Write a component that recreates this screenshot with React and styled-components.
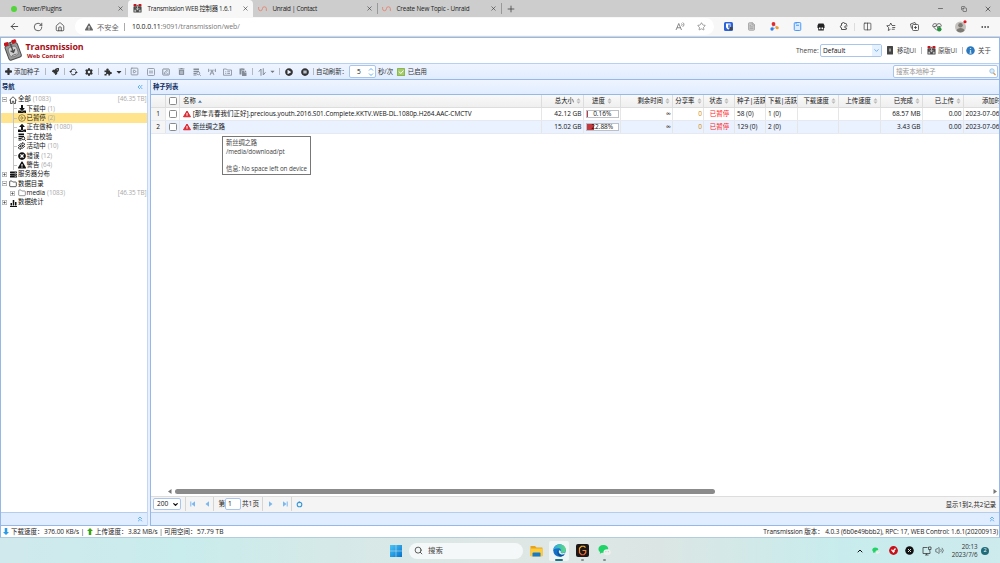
import React from 'react';
import styled, { createGlobalStyle } from 'styled-components';
import {
  ArrowLeft, RotateCw, House, Star, X, Plus, Minus, Copy, Search, ChevronDown, ChevronUp,
  ChevronsLeft, ChevronsUp, Ellipsis, Columns2, FileText, Volume2, SquarePlay, Folder, CirclePlay,
} from 'lucide-react';
import {
  FaRocket, FaCog, FaCaretDown, FaTrashAlt, FaPlayCircle, FaPauseCircle,
  FaExclamationTriangle, FaDownload, FaUpload, FaTimesCircle, FaServer, FaBroadcastTower,
  FaPaste,
} from 'react-icons/fa';

const Global = createGlobalStyle`
  * { box-sizing: border-box; }
  html, body, #root { margin: 0; height: 100%; }
  body {
    overflow: hidden;
    font-family: 'Open Sans', 'Noto Sans CJK SC', sans-serif;
    font-size: 6.6px;
    line-height: 1;
    color: #111;
  }
  svg { display: block; flex: none; }
`;

const Screen = styled.div`
  width: 1000px;
  height: 563px;
  display: flex;
  flex-direction: column;
  background: #fff;
`;

// fixed width piece of a bar
const Slot = styled.div`
  flex: 0 0 ${p => p.$w}px;
  min-width: 0;
  height: 100%;
  display: flex;
  align-items: center;
  justify-content: ${p => p.$align || 'center'};
  padding-top: ${p => (p.$size ? 1.5 : 0)}px;
  padding-left: ${p => p.$pl || 0}px;
  white-space: nowrap;
  font-size: ${p => (p.$size ? `${p.$size}px` : 'inherit')};
  letter-spacing: ${p => p.$ls || 0}px;
  color: ${p => p.$color || 'inherit'};
`;

const Spacer = styled.div`
  flex: 1;
`;

const Line = styled.i`
  flex: none;
  width: 1px;
  height: ${p => p.$h || 7}px;
  background: ${p => p.$color || '#b4b8c0'};
`;

/* browser */
const TabStrip = styled.div`
  flex: 0 0 17px;
  display: flex;
  background: #cdcdcd;
  color: #333;
`;

const Tab = styled.div`
  flex: 0 0 ${p => p.$w}px;
  display: flex;
  align-items: center;
  padding: 0 4px 0 ${p => p.$pad || 5}px;
  background: ${p => (p.$active ? '#f7f7f7' : 'transparent')};
  border-radius: 4px 4px 0 0;
`;

const TabTitle = styled.span`
  flex: 1;
  margin-left: 5.5px;
  padding-top: 1px;
  font-size: 6.3px;
  letter-spacing: ${p => p.$ls || -0.15}px;
  white-space: nowrap;
  color: #222;
`;

const GreenDot = styled.i`
  width: 6px;
  height: 6px;
  border-radius: 50%;
  background: #52d53a;
`;

const NavBar = styled.div`
  flex: 0 0 20px;
  display: flex;
  align-items: center;
  background: #f7f7f7;
  border-bottom: 1px solid #d5d5d5;
  color: #333;
`;

const Address = styled.div`
  flex: 0 0 639px;
  height: 17px;
  display: flex;
  align-items: center;
  border-radius: 9px;
  background: #fff;
  color: #666;
`;

const Url = styled.span`
  margin-left: 7px;
  padding-top: 1px;
  font-size: 6.9px;
  letter-spacing: -0.04px;
  color: #777;
  b { font-weight: 400; color: #111; }
`;

/* page */
const Page = styled.div`
  flex: 0 0 501px;
  display: flex;
  flex-direction: column;
  border: 1px solid #95b8e7;
  border-bottom: 1px solid #b2cddc;
`;

const Header = styled.div`
  flex: 0 0 25px;
  display: flex;
  align-items: center;
  color: #444;
`;

const Brand = styled.div`
  width: 200px;
  margin-left: 3.5px;
  padding-top: 1px;
  color: #a80d14;
  font-weight: 700;
`;

const BrandName = styled.div`
  font-size: 8.9px;
  letter-spacing: -0.08px;
`;

const BrandSub = styled.div`
  margin: 1px 0 0 1.5px;
  font-size: 6px;
`;

const Field = styled.div`
  flex: 0 0 ${p => p.$w}px;
  height: ${p => p.$h || 13}px;
  display: flex;
  align-items: center;
  justify-content: space-between;
  border: 1px solid #a9c5ec;
  border-radius: 2px;
  background: #fff;
  padding: 1px ${p => p.$pr || 1}px 0 ${p => p.$pl || 2}px;
  color: ${p => p.$color || '#111'};
  white-space: nowrap;
`;

const SelectArrow = styled.span`
  width: 9px;
  height: 11px;
  margin: -1px -1px 0 0;
  display: flex;
  align-items: center;
  justify-content: center;
  background: #e6f1ff;
  color: #5ba5ea;
`;

const Toolbar = styled.div`
  flex: 0 0 17px;
  display: flex;
  align-items: center;
  border-top: 1px solid #b7d0f2;
  border-bottom: 1px solid #95b8e7;
  background: linear-gradient(#eff5ff, #e0ecff);
  color: #333;
`;

const Body = styled.div`
  flex: 0 0 446px;
  display: flex;
  background: #e6f0ff;
`;

const Side = styled.div`
  flex: 0 0 147px;
  display: flex;
  flex-direction: column;
  border-right: 1px solid #c3d7f2;
  background: #fff;
`;

const Main = styled.div`
  flex: 1;
  min-width: 0;
  margin-left: 2px;
  display: flex;
  flex-direction: column;
  border-left: 1px solid #95b8e7;
  background: #fff;
`;

const PanelTitle = styled.div`
  flex: 0 0 14.5px;
  display: flex;
  align-items: center;
  justify-content: space-between;
  padding: 1px 3px 0 ${p => p.$pl || 1}px;
  border-bottom: 1px solid ${p => p.$line || '#95b8e7'};
  background: linear-gradient(#eff5ff, #e0ecff);
  color: #0e2d5f;
  font-weight: 700;
  font-size: 6.3px;
  svg { color: #5fb0f5; }
`;

const FootStrip = styled.div`
  flex: 0 0 14.5px;
  display: flex;
  align-items: center;
  justify-content: flex-end;
  padding-right: 3px;
  border-top: 1px solid #b5cdec;
  border-bottom: 1px solid #95b8e7;
  background: #e0ecff;
  color: #5fb0f5;
`;

const Tree = styled.div`
  flex: 1;
`;

const TreeRow = styled.div`
  height: 9.38px;
  display: flex;
  align-items: center;
  padding: 0.7px 0 0 ${p => p.$indent}px;
  background: ${p => (p.$on ? '#ffe48d' : 'transparent')};
  white-space: nowrap;
  font-size: 6.4px;
`;

const TreeIcon = styled.span`
  width: 9px;
  margin-right: 0.5px;
  display: flex;
  justify-content: center;
`;

const Muted = styled.span`
  margin-left: ${p => (p.$end ? 'auto' : '2px')};
  margin-right: 0.5px;
  color: #aaa;
  letter-spacing: ${p => (p.$end ? -0.1 : -0.08)}px;
`;

const Branch = styled.span`
  width: 4px;
  height: 9.4px;
  margin-right: 0.5px;
  border-left: 1px solid #c4c4c4;
  display: flex;
  align-items: center;
  &::after {
    content: '';
    width: 3px;
    height: 1px;
    background: #c4c4c4;
  }
`;

const Grid = styled.div`
  flex: 1;
  overflow: hidden;
`;

const GridRow = styled.div`
  height: 13px;
  display: flex;
  width: 900px;
  background: ${p => (p.$head ? 'linear-gradient(#f9f9f9, #efefef)' : p.$on ? '#eaf2ff' : '#fff')};
  border-bottom: 1px solid ${p => (p.$head ? '#ddd' : '#e6e9ef')};
`;

const Cell = styled.div`
  flex: 0 0 ${p => p.$w}px;
  display: flex;
  align-items: center;
  justify-content: ${p => p.$align || 'flex-start'};
  padding: ${p => (p.$bare ? 0 : 1.5)}px ${p => p.$pr ?? 2}px 0 ${p => p.$pl ?? 2}px;
  overflow: hidden;
  white-space: nowrap;
  border-right: 1px solid ${p => (p.$head ? '#ddd' : '#e6e6e6')};
  background: ${p => (p.$gutter ? '#f5f5f5' : 'transparent')};
  color: ${p => p.$color || '#111'};
  font-size: ${p => (p.$head ? 6.4 : 6.5)}px;
  letter-spacing: ${p => p.$ls || 0}px;
`;

const Check = styled.i`
  width: 8px;
  height: 8px;
  flex: none;
  border: 1px solid #8a8a8a;
  border-radius: 1.5px;
  background: #fff;
`;

const Progress = styled.div`
  position: relative;
  width: 33px;
  height: 8px;
  display: flex;
  align-items: center;
  justify-content: center;
  border: 1px solid #bcc0c6;
  background: #fff;
`;

const ProgressFill = styled.i`
  position: absolute;
  left: 0;
  top: 0;
  bottom: 0;
  background: #c13a40;
`;

const ProgressText = styled.span`
  position: relative;
  padding-top: 1px;
`;

const Tooltip = styled.div`
  position: absolute;
  left: 222px;
  top: 136px;
  width: 89px;
  height: 39px;
  padding: 2px 3px;
  border: 1px solid #777;
  background: #fff;
  color: #444;
  font-size: 6.3px;
  letter-spacing: -0.1px;
  line-height: 8.5px;
  white-space: pre;
`;

const HScroll = styled.div`
  flex: 0 0 8px;
  display: flex;
  align-items: center;
  padding: 0 2px 0 17px;
`;

const Thumb = styled.i`
  width: 540px;
  height: 5px;
  margin: 0 auto 0 3px;
  border-radius: 3px;
  background: #8b8b8b;
`;

const Pager = styled.div`
  flex: 0 0 16px;
  display: flex;
  align-items: center;
  background: #f4f4f4;
  border-top: 1px solid #ddd;
  color: #222;
`;

const Status = styled.div`
  flex: 0 0 11px;
  display: flex;
  align-items: center;
  color: #222;
  white-space: nowrap;
`;

/* taskbar */
const Taskbar = styled.div`
  flex: 0 0 25px;
  display: flex;
  align-items: center;
  background: linear-gradient(90deg, #d0e9ec 0, #c9ecec 18%, #d5e9e8 33%, #dfe7e5 50%, #dbe6e4 66%, #c8eced 84%, #cdeaed 100%);
`;

const SearchPill = styled.div`
  flex: 0 0 114px;
  height: 16px;
  display: flex;
  align-items: center;
  padding-left: 5px;
  gap: 5px;
  border-radius: 8px;
  background: #f5f8f8;
  color: #444;
  font-size: 7.4px;
`;

const AppIcon = styled.div`
  flex: 0 0 ${p => p.$w}px;
  height: 20px;
  display: flex;
  flex-direction: column;
  align-items: center;
  justify-content: flex-end;
  gap: 2px;
  border-radius: 2px;
  background: ${p => (p.$on ? '#eff5f4' : 'transparent')};
  &::after {
    content: '';
    width: ${p => (p.$on ? 8 : p.$run ? 3 : 0)}px;
    height: 1.5px;
    border-radius: 1px;
    background: ${p => (p.$on ? '#1f7186' : '#848e8e')};
  }
`;

const Clock = styled.div`
  width: 32px;
  text-align: right;
  font-size: 6.3px;
  letter-spacing: -0.05px;
  line-height: 8px;
  color: #333;
`;

const Badge = styled.div`
  width: 8px;
  height: 8px;
  margin-left: 3.5px;
  border-radius: 50%;
  background: #1f6b7a;
  color: #fff;
  font-size: 5.5px;
  display: flex;
  align-items: center;
  justify-content: center;
`;

const LogoIcon = ({ size = 9 }) => (
  <svg width={size} height={size} viewBox="0 0 20 20">
    <rect x="1" y="5" width="18" height="14" rx="1.5" fill="#484848" />
    <path d="M3 13h4v4H3zM13 13h4v4h-4z" fill="#bbb" />
    <path d="M10 5v8M6 9l4 4 4-4" stroke="#ddd" strokeWidth="1.6" fill="none" />
    <rect x="1" y="0" width="7" height="5" rx="2" fill="#c8141c" />
    <rect x="12" y="0" width="7" height="5" rx="2" fill="#c8141c" />
    <path d="M8 3h4" stroke="#444" strokeWidth="2" />
  </svg>
);

const BigLogo = () => (
  <svg width="18" height="23" viewBox="0 0 18 23">
    <g transform="rotate(-20 9 12)">
      <rect x="2.5" y="5" width="13" height="15" rx="2" fill="#9a9a9a" stroke="#4a4a4a" />
      <rect x="4.5" y="7.5" width="9" height="10" rx="3" fill="#cfcfcf" stroke="#666" strokeWidth=".7" />
      <path d="M9 4v9M6.8 11L9 13.5l2.2-2.5" fill="none" stroke="#4a4a4a" strokeWidth="1.3" />
      <path d="M6.5 16h5" stroke="#666" />
      <rect x="2.5" y="1.5" width="5" height="3.6" rx="1.5" fill="#c9151c" />
      <rect x="10.5" y="1.5" width="5" height="3.6" rx="1.5" fill="#c9151c" />
      <path d="M7.5 3.3h3" stroke="#444" strokeWidth="1.5" />
    </g>
  </svg>
);

const UnraidIcon = () => (
  <svg width="9" height="6" viewBox="0 0 9 6">
    <path d="M.6 1v1.8a1.900 1.900 0 0 0 3.800 0a2 2 0 0 1 4 0V5" fill="none" stroke="#e5866f" strokeWidth=".9" />
  </svg>
);

const AddIcon = () => (
  <svg width="7" height="7" viewBox="0 0 14 14">
    <path d="M7 2v10M2 7h10" stroke="#333" strokeWidth="4.6" strokeLinecap="round" />
  </svg>
);

const Reload = () => (
  <svg width="9" height="8" viewBox="0 0 18 16" fill="none" stroke="#333" strokeWidth="1.9">
    <path d="M3.5 7A5.700 5.700 0 0 1 14 5M14.500 9A5.700 5.700 0 0 1 4 11" />
    <path d="M.5 6h6L3.500 10zM11.500 10h6L14.500 6z" fill="#333" stroke="none" />
  </svg>
);

const PuzzleIcon = () => (
  <svg width="8" height="8" viewBox="0 0 16 16" fill="#333">
    <path d="M1 5h4.200a2.400 2.400 0 1 1 3.600 0H12v3.200a2.300 2.300 0 1 1 0 3.600V15H8.600a2 2 0 1 0-3.200 0H1v-3.600a2 2 0 1 0 0-3z" />
  </svg>
);

const Extension = () => (
  <svg width="9" height="9" viewBox="0 0 18 18" fill="none" stroke="#333" strokeWidth="1.7">
    <path d="M15 6V4.500A1.500 1.500 0 0 0 13.500 3H11a2.200 2.200 0 0 0-4.400 0H5v4a2.200 2.200 0 1 0 0 4.600v3.400h8.500a1.500 1.500 0 0 0 1.500-1.500V12h-1.500a2 2 0 0 1 0-4.200H17" />
  </svg>
);

const DbSearch = () => (
  <svg width="8" height="8" viewBox="0 0 16 16">
    <path d="M1 1h11v3H1zM1 5.500h11V8H1zM1 9.500h6V12H1zM1 13h6v2H1z" fill="currentColor" />
    <circle cx="10.5" cy="10.5" r="3" fill="none" stroke="currentColor" strokeWidth="1.6" />
    <path d="M12.800 12.800L15.500 15.500" stroke="currentColor" strokeWidth="1.8" />
  </svg>
);

const PauseBox = () => (
  <svg width="8" height="8" viewBox="0 0 16 16" fill="none" stroke="currentColor" strokeWidth="1.6">
    <rect x="1" y="1" width="14" height="14" rx="2" />
    <path d="M6 5v6M10 5v6" strokeWidth="2" />
  </svg>
);

const EditBox = () => (
  <svg width="8" height="8" viewBox="0 0 16 16" fill="none" stroke="currentColor" strokeWidth="2">
    <rect x="1.5" y="2" width="13" height="12" rx="1" />
    <path d="M4 11.500l1-3 5-4 1.500 1.500-5 4.500zM9 11.500h3.500" strokeWidth="1.4" />
  </svg>
);

const FolderList = () => (
  <svg width="9" height="8" viewBox="0 0 18 16" fill="none" stroke="currentColor" strokeWidth="1.6">
    <path d="M1 2h6l1.500 2H17v10.500H1zM4.500 7.500h2M8.500 7.500h5.500M4.500 11h2M8.500 11h5.500" />
  </svg>
);

const SortArrows = () => (
  <svg width="8" height="8" viewBox="0 0 16 16" fill="none" stroke="currentColor" strokeWidth="2">
    <path d="M6 15.500V2L1.500 7.500M10.500.500v13.500L15 8.500" />
  </svg>
);

const HomeOutline = () => (
  <svg width="8" height="8" viewBox="0 0 16 16" fill="none" stroke="#222" strokeWidth="1.5">
    <path d="M.8 8.500L8 1.500l7.200 7M3 7v8h3.500v-4.500h3V15H13V7" />
  </svg>
);

const Active = () => (
  <svg width="9" height="8" viewBox="0 0 18 16" fill="none" stroke="#111" strokeWidth="1.5">
    <path d="M2 8l5-4.500h4V1l5 3.500L11 8V6H8L5 8.500M16 8l-5 4.500H7V15l-5-3.500L7 8v2h3l3-2.500" />
  </svg>
);

const Bars = () => (
  <svg width="7" height="8" viewBox="0 0 14 16" fill="#111">
    <path d="M0 14h14v2H0zM1 8h3v5H1zM5.500 2h3v11h-3zM10 6h3v7h-3z" />
  </svg>
);

const Expander = ({ open }) => (
  <svg width="5" height="5" viewBox="0 0 10 10" style={{ marginRight: 2 }}>
    <rect x=".7" y=".7" width="8.6" height="8.6" fill="#fff" stroke="#aaa" strokeWidth="1.4" />
    <path d={open ? 'M2.500 5h5' : 'M2.500 5h5M5 2.500v5'} stroke="#444" strokeWidth="1.4" />
  </svg>
);

const Sorter = () => (
  <svg width="5" height="6" viewBox="0 0 5 6" fill="#b8b8b8" style={{ marginLeft: 2 }}>
    <path d="M.5 2.500L2.500.3 4.500 2.500zM.5 3.500L2.500 5.700 4.500 3.500z" />
  </svg>
);

const PageArrow = ({ back, bar }) => (
  <svg width="6" height="6" viewBox="0 0 6 6" fill="#7ab8f2">
    <g transform={back ? undefined : 'translate(6 0) scale(-1 1)'}>
      <path d="M5 .3v5.400L1.500 3z" />
      {bar && <path d="M.3.500h1v5h-1z" />}
    </g>
  </svg>
);

const ScrollArrow = ({ right }) => (
  <svg width="4" height="5" viewBox="0 0 4 5">
    <path d={right ? 'M.5 0v5L4 2.500z' : 'M3.500 0v5L0 2.500z'} fill="#777" />
  </svg>
);

const UpDown = ({ up }) => (
  <svg width="6" height="7" viewBox="0 0 12 14" fill={up ? '#3aa512' : '#2c9be8'}>
    <path d={up ? 'M6 0l6 6H8.500v8h-5V6H0z' : 'M6 14L0 8h3.500V0h5v8H12z'} />
  </svg>
);

const Warn = () => (
  <svg width="8" height="8" viewBox="0 0 16 15" style={{ marginTop: -1.5 }}>
    <path d="M8 1.500L15 13H1z" fill="#dc2a34" stroke="#dc2a34" strokeWidth="2" strokeLinejoin="round" />
    <path d="M6.300 5.500h3.400v5.500H6.300z" fill="#f3a9a9" />
  </svg>
);

const Pot = ({ size }) => (
  <svg width={size} height={size} viewBox="0 0 16 16" fill="#222">
    <path d="M3 1h10l2 4v5H1V5zM2.500 10h11v5h-11z" />
    <path d="M4 9h3v3.500H4zM9 9h3v3.500H9z" fill="#fff" />
  </svg>
);

const WeChat = ({ size }) => (
  <svg width={size} height={size} viewBox="0 0 14 14">
    <path d="M5.500 1C2.500 1 .5 3 .5 5.300c0 1.400.7 2.500 1.700 3.200L2 10.500l2-1c3.800.8 7-1.200 7-4.200S8.500 1 5.500 1z" fill="#1fd366" />
    <ellipse cx="9.8" cy="8.8" rx="3.9" ry="3.2" fill="#eef0ef" />
    <circle cx="8.5" cy="8.3" r=".5" fill="#999" />
    <circle cx="11" cy="8.3" r=".5" fill="#999" />
  </svg>
);

const Edge = () => (
  <svg width="13" height="13" viewBox="0 0 26 26">
    <defs>
      <linearGradient id="edgeTop" x1="0" x2="1">
        <stop offset="0" stopColor="#2aa7e6" />
        <stop offset="1" stopColor="#5bdc7c" />
      </linearGradient>
    </defs>
    <circle cx="13" cy="13" r="12.5" fill="#146fc7" />
    <path d="M.6 12C1.500 5 7 .5 13 .5c7 0 12.500 4.800 12.500 11 0 4-3 6.500-6.500 6.500-2.500 0-4-1-3.500-2.200 2-3.300-.5-7.300-5-7.300C5.500 8.500 2 10 .6 12z" fill="url(#edgeTop)" />
    <path d="M10.500 12c-1.500 5 2 10 8 10 2 0 4-.6 5-1.400-1 2-4 4.400-8 4.900C9 24 7 16 10.500 12z" fill="#0c4f93" />
    <path d="M15.600 15.500c-1 1.700.6 3 3.600 3 3.100 0 5.300-1.300 5.800-2.300-.5 2.500-2.500 4.800-6.500 4.800-5 0-8-4.500-6-8.500 2 0 3.600 1.500 3.100 3z" fill="#f0f5f4" />
  </svg>
);

const treeRows = [
  { t: '下载中', n: '(1)', i: <FaDownload size={8} /> },
  { t: '已暂停', n: '(2)', i: <CirclePlay size={8} color="#6d5a1e" />, on: true },
  { t: '正在做种', n: '(1080)', i: <FaUpload size={8} /> },
  { t: '正在校验', i: <DbSearch /> },
  { t: '活动中', n: '(10)', i: <Active /> },
  { t: '错误', n: '(12)', i: <FaTimesCircle size={8} /> },
  { t: '警告', n: '(64)', i: <FaExclamationTriangle size={8} /> },
];

const columns = [
  { w: 41.5, t: '总大小', align: 'flex-end', sort: true },
  { w: 37.5, t: '进度', align: 'center', sort: true },
  { w: 51.5, t: '剩余时间', align: 'flex-end', sort: true },
  { w: 31.5, t: '分享率', align: 'flex-end', sort: true, color: '#d08a00' },
  { w: 31, t: '状态', align: 'center', sort: true, color: '#ff1b1b' },
  { w: 31, t: '种子|活跃' },
  { w: 31.5, t: '下载|活跃' },
  { w: 41, t: '下载速度', align: 'flex-end', sort: true },
  { w: 42, t: '上传速度', align: 'flex-end', sort: true },
  { w: 42, t: '已完成', align: 'flex-end', sort: true },
  { w: 41, t: '已上传', align: 'flex-end', sort: true },
  { w: 70, t: '添加时间', headAlign: 'center', sort: true },
];

const torrents = [
  {
    name: '[那年青春我们正好].precious.youth.2016.S01.Complete.KKTV.WEB-DL.1080p.H264.AAC-CMCTV',
    progress: 0.16,
    cells: ['42.12 GB', null, '∞', '0', '已暂停', '58 (0)', '1 (0)', '', '', '68.57 MB', '0.00', '2023-07-06'],
  },
  {
    name: '新丝绸之路',
    progress: 22.88,
    cells: ['15.02 GB', null, '∞', '0', '已暂停', '129 (0)', '2 (0)', '', '', '3.43 GB', '0.00', '2023-07-06'],
  },
];

const Browser = () => (
  <>
    <TabStrip>
      <Tab $w={128} $pad={11}>
        <GreenDot /><TabTitle $ls={-0.2}>Tower/Plugins</TabTitle><X size={7} />
      </Tab>
      <Tab $w={125} $active>
        <LogoIcon /><TabTitle $ls={-0.22}>Transmission WEB 控制器 1.6.1</TabTitle><X size={7} />
      </Tab>
      <Tab $w={124}>
        <UnraidIcon /><TabTitle $ls={-0.3}>Unraid | Contact</TabTitle><X size={7} />
      </Tab>
      <Slot $w={1}><Line $h={11} $color="#999" /></Slot>
      <Tab $w={123} $pad={4}>
        <UnraidIcon /><TabTitle>Create New Topic - Unraid</TabTitle><X size={7} />
      </Tab>
      <Slot $w={1}><Line $h={11} $color="#999" /></Slot>
      <Slot $w={18}><Plus size={10} strokeWidth={1.7} /></Slot>
      <Spacer />
      <Slot $w={24}><Minus size={7} /></Slot>
      <Slot $w={24}><Copy size={6} style={{ transform: 'scaleX(-1) rotate(90deg)' }} /></Slot>
      <Slot $w={24}><X size={8} /></Slot>
    </TabStrip>
    <NavBar>
      <Slot $w={4} />
      <Slot $w={21}><ArrowLeft size={11} strokeWidth={1.8} /></Slot>
      <Slot $w={25}><RotateCw size={10} strokeWidth={1.8} /></Slot>
      <Slot $w={20}><House size={10} strokeWidth={1.8} /></Slot>
      <Slot $w={5} />
      <Address>
        <Slot $w={22} $align="flex-end"><FaExclamationTriangle size={8} style={{ marginRight: 4 }} /></Slot>
        <Slot $w={27} $align="flex-start" $size={7.2}>不安全</Slot>
        <Line $h={8} $color="#aaa" />
        <Url><b>10.0.0.11</b>:9091/transmission/web/</Url>
        <Spacer />
        <Slot $w={20}>
          <svg width="10" height="9" viewBox="0 0 20 18" fill="none" stroke="#666" strokeWidth="1.5">
            <path d="M2 16L7.500 3 13 16M4 11.500h7M13 3c1.500 1 1.500 3 0 4.500M15.500 1c3 2 3 6 0 8.500" />
          </svg>
        </Slot>
        <Slot $w={22}><Star size={9} strokeWidth={1.6} /></Slot>
        <Slot $w={2} />
      </Address>
      <Slot $w={3} />
      <Slot $w={23}>
        <svg width="9" height="9" viewBox="0 0 18 18">
          <rect width="18" height="18" rx="3" fill="#2b62d9" />
          <path d="M4 3h9v6c0 3-2 4.500-4.500 6C6 13.500 4 12 4 9z" fill="#fff" />
          <path d="M8.500 5h3v4c0 2-1.500 3-3 4z" fill="#2b62d9" />
          <rect x="11" y="10" width="6" height="6" fill="#444" />
        </svg>
      </Slot>
      <Slot $w={23}><FileText size={9} color="#999" fill="#ccc" /></Slot>
      <Slot $w={23}>
        <svg width="9" height="9" viewBox="0 0 18 18">
          <path d="M6 5v9l8-4z" stroke="#777" fill="none" />
          <circle cx="7" cy="4" r="3.8" fill="#e5282c" />
          <circle cx="4" cy="14" r="3.3" fill="#2f7ef0" />
          <circle cx="14.5" cy="11.5" r="3" fill="#f59b23" />
        </svg>
      </Slot>
      <Slot $w={23}>
        <svg width="9" height="9" viewBox="0 0 18 18" fill="none" stroke="#3a8df5" strokeWidth="1.8">
          <rect x="2.5" y="1" width="13" height="16" rx="2" fill="#dcecff" />
          <path d="M6 6.500h6M6 2v2" />
        </svg>
      </Slot>
      <Slot $w={23}><Pot size={8} /></Slot>
      <Slot $w={22}><Extension /></Slot>
      <Line $h={8} $color="#ddd" />
      <Slot $w={25}><Columns2 size={9} strokeWidth={1.8} /></Slot>
      <Slot $w={22}>
        <svg width="10" height="10" viewBox="0 0 20 20" fill="none" stroke="#333" strokeWidth="1.5">
          <path d="M9 14.500L4.500 17l1-5.500L1.500 7.500 7 7l2.500-5L12 7h6.500M12.500 11h6M11.500 14.500h6" />
        </svg>
      </Slot>
      <Slot $w={24}>
        <svg width="9" height="9" viewBox="0 0 18 18" fill="none" stroke="#333" strokeWidth="1.5">
          <rect x="5" y="5" width="12" height="12" rx="2" />
          <path d="M11 8v6M8 11h6M3 13L1 4l9-3 2 3" />
        </svg>
      </Slot>
      <Slot $w={22}>
        <svg width="10" height="10" viewBox="0 0 20 20">
          <path d="M10 17L2 9C0 5 5 1 10 5c5-4 10 0 8 4M3 9h4l2-3 2 5 2-2h4" fill="none" stroke="#333" strokeWidth="1.5" />
          <circle cx="14.5" cy="14.5" r="4.5" fill="#23923a" />
        </svg>
      </Slot>
      <Slot $w={25}>
        <svg width="13" height="13" viewBox="0 0 26 26">
          <circle cx="13" cy="14" r="11" fill="#c4c0bb" />
          <circle cx="13" cy="10.5" r="4.5" fill="#7d7974" />
          <path d="M5 21c1-7 15-7 16 0-4 5-12 5-16 0z" fill="#7d7974" />
          <circle cx="22" cy="3.5" r="3.2" fill="#e8121d" />
        </svg>
      </Slot>
      <Slot $w={23}><Ellipsis size={10} /></Slot>
    </NavBar>
  </>
);

const TopBar = () => (
  <Header>
    <Slot $w={3} />
    <BigLogo />
    <Brand>
      <BrandName>Transmission</BrandName>
      <BrandSub>Web Control</BrandSub>
    </Brand>
    <Spacer />
    <Slot $w={24} $align="flex-start" $size={6.5}>Theme:</Slot>
    <Field $w={62}>Default<SelectArrow><ChevronDown size={7} strokeWidth={3} /></SelectArrow></Field>
    <Slot $w={15}>
      <svg width="6" height="9" viewBox="0 0 12 18">
        <rect width="12" height="17" rx="1" fill="#444" />
        <path d="M4 5h4v6H4z" fill="#999" />
      </svg>
    </Slot>
    <Slot $w={24} $align="flex-start" $size={6.4} $ls={-0.1}>移动UI</Slot>
    <Line />
    <Slot $w={14} $align="flex-end"><LogoIcon size={9} /></Slot>
    <Slot $w={26} $align="flex-start" $pl={2} $size={6.4} $ls={-0.1}>原版UI</Slot>
    <Line />
    <Slot $w={15}>
      <svg width="9" height="9" viewBox="0 0 18 18">
        <circle cx="9" cy="9" r="8.5" fill="#2d78bd" />
        <path d="M9 4v2M9 8v6M7 14h4" stroke="#b8dcf5" strokeWidth="2.5" />
      </svg>
    </Slot>
    <Slot $w={21} $align="flex-start" $size={6.4}>关于</Slot>
  </Header>
);

const Tools = () => (
  <Toolbar>
    <Slot $w={2} />
    <Slot $w={11}><AddIcon /></Slot>
    <Slot $w={31} $align="flex-start" $size={6.4}>添加种子</Slot>
    <Line />
    <Slot $w={18}><FaRocket size={7} /></Slot>
    <Line />
    <Slot $w={17}><Reload /></Slot>
    <Slot $w={14}><FaCog size={8} /></Slot>
    <Slot $w={2} />
    <Line />
    <Slot $w={17}><PuzzleIcon /></Slot>
    <Slot $w={5}><FaCaretDown size={8} /></Slot>
    <Slot $w={4} />
    <Line />
    <Slot $w={17} $color="#848c98"><SquarePlay size={9} strokeWidth={2.2} /></Slot>
    <Slot $w={15} $color="#848c98"><PauseBox /></Slot>
    <Slot $w={15} $color="#848c98"><EditBox /></Slot>
    <Slot $w={16} $color="#848c98"><FaTrashAlt size={7} /></Slot>
    <Slot $w={15} $color="#848c98"><DbSearch /></Slot>
    <Slot $w={16} $color="#848c98"><FaBroadcastTower size={8} /></Slot>
    <Slot $w={15} $color="#848c98"><FolderList /></Slot>
    <Slot $w={15} $color="#848c98"><FaPaste size={8} /></Slot>
    <Slot $w={2} />
    <Line />
    <Slot $w={17} $color="#848c98"><SortArrows /></Slot>
    <Slot $w={4} $color="#777"><FaCaretDown size={7} /></Slot>
    <Slot $w={5} />
    <Line />
    <Slot $w={18}><FaPlayCircle size={8} /></Slot>
    <Slot $w={13}><FaPauseCircle size={8} /></Slot>
    <Slot $w={2} />
    <Line />
    <Slot $w={35} $align="flex-start" $size={6.4} $pl={2}>自动刷新：</Slot>
    <Field $w={27} $pl={7} $pr={1} $h={13}>
      5
      <svg width="6" height="10" viewBox="0 0 6 10" fill="none" stroke="#66b1ee">
        <path d="M1 3.500L3 1.500 5 3.500M1 6.500L3 8.500 5 6.500" />
      </svg>
    </Field>
    <Slot $w={19} $size={6.4}>秒/次</Slot>
    <Slot $w={11}>
      <svg width="8" height="8" viewBox="0 0 16 16">
        <rect width="16" height="16" rx="1" fill="#8cb750" />
        <path d="M2 2h12v12H2z" fill="#a5cb6b" />
        <path d="M4 7l3.500 4L13 5" fill="none" stroke="#fff" strokeWidth="2" />
      </svg>
    </Slot>
    <Slot $w={21} $align="flex-end" $size={6.4}>已启用</Slot>
    <Spacer />
    <Field $w={105} $color="#999">
      搜索本地种子
      <svg width="7" height="8" viewBox="0 0 14 16">
        <path d="M8.500 9.500L13 14" stroke="#d89a50" strokeWidth="2.5" />
        <circle cx="6" cy="6" r="4.5" fill="#d8ebfa" stroke="#8db8dc" strokeWidth="1.5" />
      </svg>
    </Field>
    <Slot $w={1} />
  </Toolbar>
);

const Sidebar = () => (
  <Side>
    <PanelTitle $line="#fff">导航<ChevronsLeft size={8} strokeWidth={3} /></PanelTitle>
    <Tree>
      <TreeRow $indent={0.5}>
        <Expander open /><TreeIcon><HomeOutline /></TreeIcon>全部<Muted>(1083)</Muted>
        <Muted $end>[46.35 TB]</Muted>
      </TreeRow>
      {treeRows.map(r => (
        <TreeRow key={r.t} $indent={11.5} $on={r.on}>
          <Branch /><TreeIcon>{r.i}</TreeIcon>{r.t}{r.n && <Muted>{r.n}</Muted>}
        </TreeRow>
      ))}
      <TreeRow $indent={0.5}><Expander /><TreeIcon><FaServer size={7} /></TreeIcon>服务器分布</TreeRow>
      <TreeRow $indent={0.5}><Expander open /><TreeIcon><Folder size={8} /></TreeIcon>数据目录</TreeRow>
      <TreeRow $indent={9}>
        <Expander /><TreeIcon><Folder size={8} color="#666" /></TreeIcon>media<Muted>(1083)</Muted>
        <Muted $end>[46.35 TB]</Muted>
      </TreeRow>
      <TreeRow $indent={0.5}><Expander /><TreeIcon><Bars /></TreeIcon>数据统计</TreeRow>
    </Tree>
    <FootStrip><ChevronsUp size={8} strokeWidth={3} /></FootStrip>
  </Side>
);

const TorrentList = () => (
  <Main>
    <PanelTitle $pl={2}>种子列表</PanelTitle>
    <Grid>
      <GridRow $head>
        <Cell $w={15} $head />
        <Cell $w={14} $head $bare $align="center"><Check /></Cell>
        <Cell $w={362} $head $pl={3}>
          名称
          <svg width="4" height="3" viewBox="0 0 5 3" style={{ marginLeft: 2 }}><path d="M0 3L2.500 0 5 3z" fill="#4a7fb8" /></svg>
        </Cell>
        {columns.map(c => (
          <Cell key={c.t} $w={c.w} $head $align={c.headAlign || c.align} $pr={1.5}>
            {c.t}{c.sort && <Sorter />}
          </Cell>
        ))}
      </GridRow>
      {torrents.map((row, n) => (
        <GridRow key={row.name} $on={n === 1}>
          <Cell $w={15} $gutter $align="center">{n + 1}</Cell>
          <Cell $w={14} $bare $align="center"><Check /></Cell>
          <Cell $w={362} $ls={-0.04} $pl={3}><Warn />&nbsp;{row.name}</Cell>
          {columns.map((c, i) => (
            <Cell key={c.t} $w={c.w} $align={c.align} $color={c.color} $pr={1} $bare={row.cells[i] === null}>
              {row.cells[i] === null ? (
                <Progress>
                  <ProgressFill style={{ width: `${Math.max(row.progress, 2)}%` }} />
                  <ProgressText>{row.progress}%</ProgressText>
                </Progress>
              ) : row.cells[i]}
            </Cell>
          ))}
        </GridRow>
      ))}
    </Grid>
    <HScroll><ScrollArrow /><Thumb /><ScrollArrow right /></HScroll>
    <Pager>
      <Slot $w={2} />
      <Field $w={28} $h={12} $pl={3}>200<ChevronDown size={7} strokeWidth={4.5} /></Field>
      <Slot $w={4} />
      <Line $h={14} $color="#d5d5d5" />
      <Slot $w={14}><PageArrow back bar /></Slot>
      <Slot $w={13}><PageArrow back /></Slot>
      <Line $h={14} $color="#d5d5d5" />
      <Slot $w={11} $align="flex-end" $size={6.6}>第</Slot>
      <Field $w={16} $h={12}>1</Field>
      <Slot $w={19} $size={6.6}>共1页</Slot>
      <Slot $w={2} />
      <Line $h={14} $color="#d5d5d5" />
      <Slot $w={15}><PageArrow /></Slot>
      <Slot $w={13}><PageArrow bar /></Slot>
      <Line $h={14} $color="#d5d5d5" />
      <Slot $w={15}>
        <svg width="7" height="7" viewBox="0 0 14 14">
          <circle cx="7" cy="7" r="4.6" fill="none" stroke="#3596d8" strokeWidth="2.2" />
          <path d="M5.500 0l4 2.500-4 2.500z" fill="#3596d8" />
        </svg>
      </Slot>
      <Spacer />
      <Slot $w={52} $align="flex-end" $size={6.3}>显示1到2,共2记录</Slot>
      <Slot $w={3} />
    </Pager>
    <FootStrip><ChevronsUp size={8} strokeWidth={3} /></FootStrip>
  </Main>
);

const StatusBar = () => (
  <Status>
    <Slot $w={10}><UpDown /></Slot>
    <Slot $w={33} $align="flex-start" $size={6.5}>下载速度：</Slot>
    <Slot $w={41} $align="flex-start" $size={6.5} $ls={-0.05}>376.00 KB/s |</Slot>
    <Slot $w={9}><UpDown up /></Slot>
    <Slot $w={34} $align="flex-start" $pl={1} $size={6.5}>上传速度：</Slot>
    <Slot $w={35} $align="flex-start" $size={6.5} $ls={-0.05}>3.82 MB/s |</Slot>
    <Slot $w={34} $align="flex-start" $pl={1} $size={6.5}>可用空间：</Slot>
    <Slot $w={28} $align="flex-start" $size={6.6}>57.79 TB</Slot>
    <Spacer />
    <Slot $w={236} $align="flex-end" $size={6.5} $ls={-0.08}>Transmission 版本：&nbsp;4.0.3 (6b0e49bbb2), RPC: 17, WEB Control: 1.6.1(20200913)</Slot>
    <Slot $w={1} />
  </Status>
);

const Desktop = () => (
  <Taskbar>
    <Slot $w={389} />
    <Slot $w={14}>
      <svg width="12" height="12" viewBox="0 0 24 24">
        <defs>
          <linearGradient id="win" x2="1" y2="1">
            <stop offset="0" stopColor="#4cc5f5" />
            <stop offset="1" stopColor="#0473cf" />
          </linearGradient>
        </defs>
        <path d="M0 0h11.500v11.500H0zM12.500 0H24v11.500H12.500zM0 12.500h11.500V24H0zM12.500 12.500H24V24H12.500z" fill="url(#win)" />
      </svg>
    </Slot>
    <Slot $w={6} />
    <SearchPill><Search size={9} strokeWidth={2.3} />搜索</SearchPill>
    <Slot $w={3} />
    <Slot $w={20}>
      <svg width="13" height="12" viewBox="0 0 26 24">
        <path d="M1 2h9l3 3h11a1 1 0 0 1 1 1v16H1z" fill="#e8a317" />
        <path d="M1 7h24v14a2 2 0 0 1-2 2H3a2 2 0 0 1-2-2z" fill="#fdcb3e" />
        <path d="M5 17a2 2 0 0 1 2-2h12a2 2 0 0 1 2 2v6H5z" fill="#1879c7" />
      </svg>
    </Slot>
    <Slot $w={3} />
    <AppIcon $w={20} $on><Edge /></AppIcon>
    <Slot $w={3} />
    <AppIcon $w={20} $run>
      <svg width="13" height="13" viewBox="0 0 26 26">
        <defs>
          <linearGradient id="gg" x2="0" y2="1">
            <stop offset="0" stopColor="#f5b62c" />
            <stop offset="1" stopColor="#ee5a2c" />
          </linearGradient>
        </defs>
        <rect width="26" height="26" rx="4" fill="#1b1718" />
        <path d="M19 7l-3-2.500h-5L7 8.500v9l4 4h5l3.500-4V13H13" fill="none" stroke="url(#gg)" strokeWidth="2.4" />
      </svg>
    </AppIcon>
    <Slot $w={2} />
    <AppIcon $w={20} $run><WeChat size={13} /></AppIcon>
    <Spacer />
    <Slot $w={16}><ChevronUp size={8} strokeWidth={3} /></Slot>
    <Slot $w={17}><WeChat size={8} /></Slot>
    <Slot $w={17}>
      <svg width="9" height="9" viewBox="0 0 18 18">
        <circle cx="9" cy="9" r="8.8" fill="#c8101a" />
        <path d="M5 7l3 4 5-6M8 13l3-3" stroke="#fff" strokeWidth="2.5" fill="none" />
      </svg>
    </Slot>
    <Slot $w={16}>
      <svg width="9" height="9" viewBox="0 0 18 18">
        <circle cx="9" cy="9" r="8.5" fill="#111" />
        <path d="M6 6l6 6M12 6l-6 6" stroke="#ddd" strokeWidth="2" />
      </svg>
    </Slot>
    <Slot $w={18}>
      <svg width="10" height="10" viewBox="0 0 20 20" fill="none" stroke="#333" strokeWidth="1.5">
        <path d="M11 3H2v12h14v-4M6 18h7M9 15v3M13 2h5v5h-5zM15.500 7v4" />
      </svg>
    </Slot>
    <Slot $w={8}><Volume2 size={9} strokeWidth={1.6} color="#333" /></Slot>
    <Slot $w={2} />
    <Clock>20:13<br />2023/7/6</Clock>
    <Badge>2</Badge>
    <Slot $w={11} />
  </Taskbar>
);

const App = () => (
  <Screen>
    <Global />
    <Browser />
    <Page>
      <TopBar />
      <Tools />
      <Body>
        <Sidebar />
        <TorrentList />
      </Body>
      <StatusBar />
    </Page>
    <Desktop />
    <Tooltip>{'新丝绸之路\n/media/download/pt\n\n信息: No space left on device'}</Tooltip>
  </Screen>
);

export default App;
